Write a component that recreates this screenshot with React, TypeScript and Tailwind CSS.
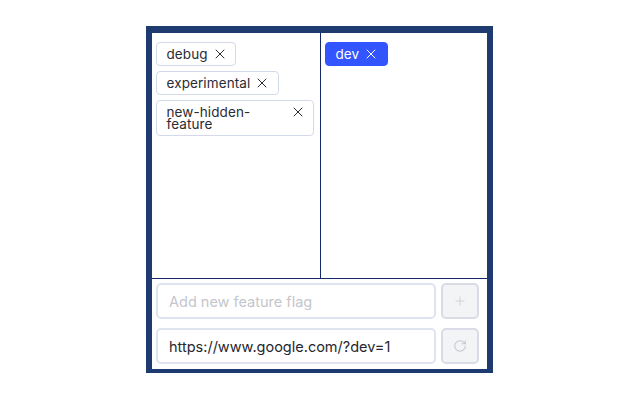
import { X, Plus, RotateCw } from 'lucide-react';

const flags = ['debug', 'experimental', 'new-hidden-feature'];

function Tag({ label, active }: { label: string; active?: boolean }) {
  return (
    <div
      className={`flex items-start justify-between gap-[4px] rounded border py-[5px] pr-[7.5px] pl-[9.5px] text-[13.5px] leading-[12px] ${
        active ? 'border-[#3355ff] bg-[#3355ff] text-white' : 'border-[#d3d9e8] bg-white text-[#2b2b33]'
      }`}
    >
      <span className="tracking-[0.1px]">{label}</span>
      <X size={16} strokeWidth={1.5} className="-my-[2px] shrink-0" />
    </div>
  );
}

function Row({ value, placeholder, icon }: { value?: string; placeholder?: string; icon: React.ReactNode }) {
  return (
    <div className="flex h-[36px] gap-[5px]">
      <input
        readOnly
        value={value}
        placeholder={placeholder}
        className="h-full min-w-0 flex-1 rounded-[5px] border-2 border-[#e0e4f0] bg-white px-[11px] text-[14.5px] text-[#26262e] outline-none placeholder:text-[#c4c6cc]"
      />
      <button className="flex h-full w-[38.5px] items-center justify-center rounded-[5px] border-2 border-[#d9dce6] bg-[#f3f4f6] text-[#c3c6cf]">
        {icon}
      </button>
    </div>
  );
}

export default function App() {
  return (
    <div className="flex h-[400px] w-[640px] items-start bg-white pt-[26px] pl-[146px] font-['Inter',sans-serif]">
      <div className="flex h-[347px] w-[347px] flex-col border-[#1d3b6e] border-t-[7px] border-r-[6px] border-b-[4px] border-l-[6px] bg-white">
        <div className="flex h-[246px] shrink-0 border-b border-[#14286b]">
          <div className="flex w-[169px] flex-col items-start gap-[5px] border-r border-[#14286b] py-[9px] pr-[6px] pl-[4px]">
            {flags.map(flag => (
              <Tag key={flag} label={flag} />
            ))}
          </div>
          <div className="flex flex-1 items-start py-[9px] pl-[4px]">
            <Tag label="dev" active />
          </div>
        </div>
        <div className="flex flex-col gap-[9px] pt-[4px] pr-[8px] pl-[4px]">
          <Row placeholder="Add new feature flag" icon={<Plus size={14} strokeWidth={1.25} />} />
          <Row value="https://www.google.com/?dev=1" icon={<RotateCw size={14} strokeWidth={1.75} />} />
        </div>
      </div>
    </div>
  );
}
